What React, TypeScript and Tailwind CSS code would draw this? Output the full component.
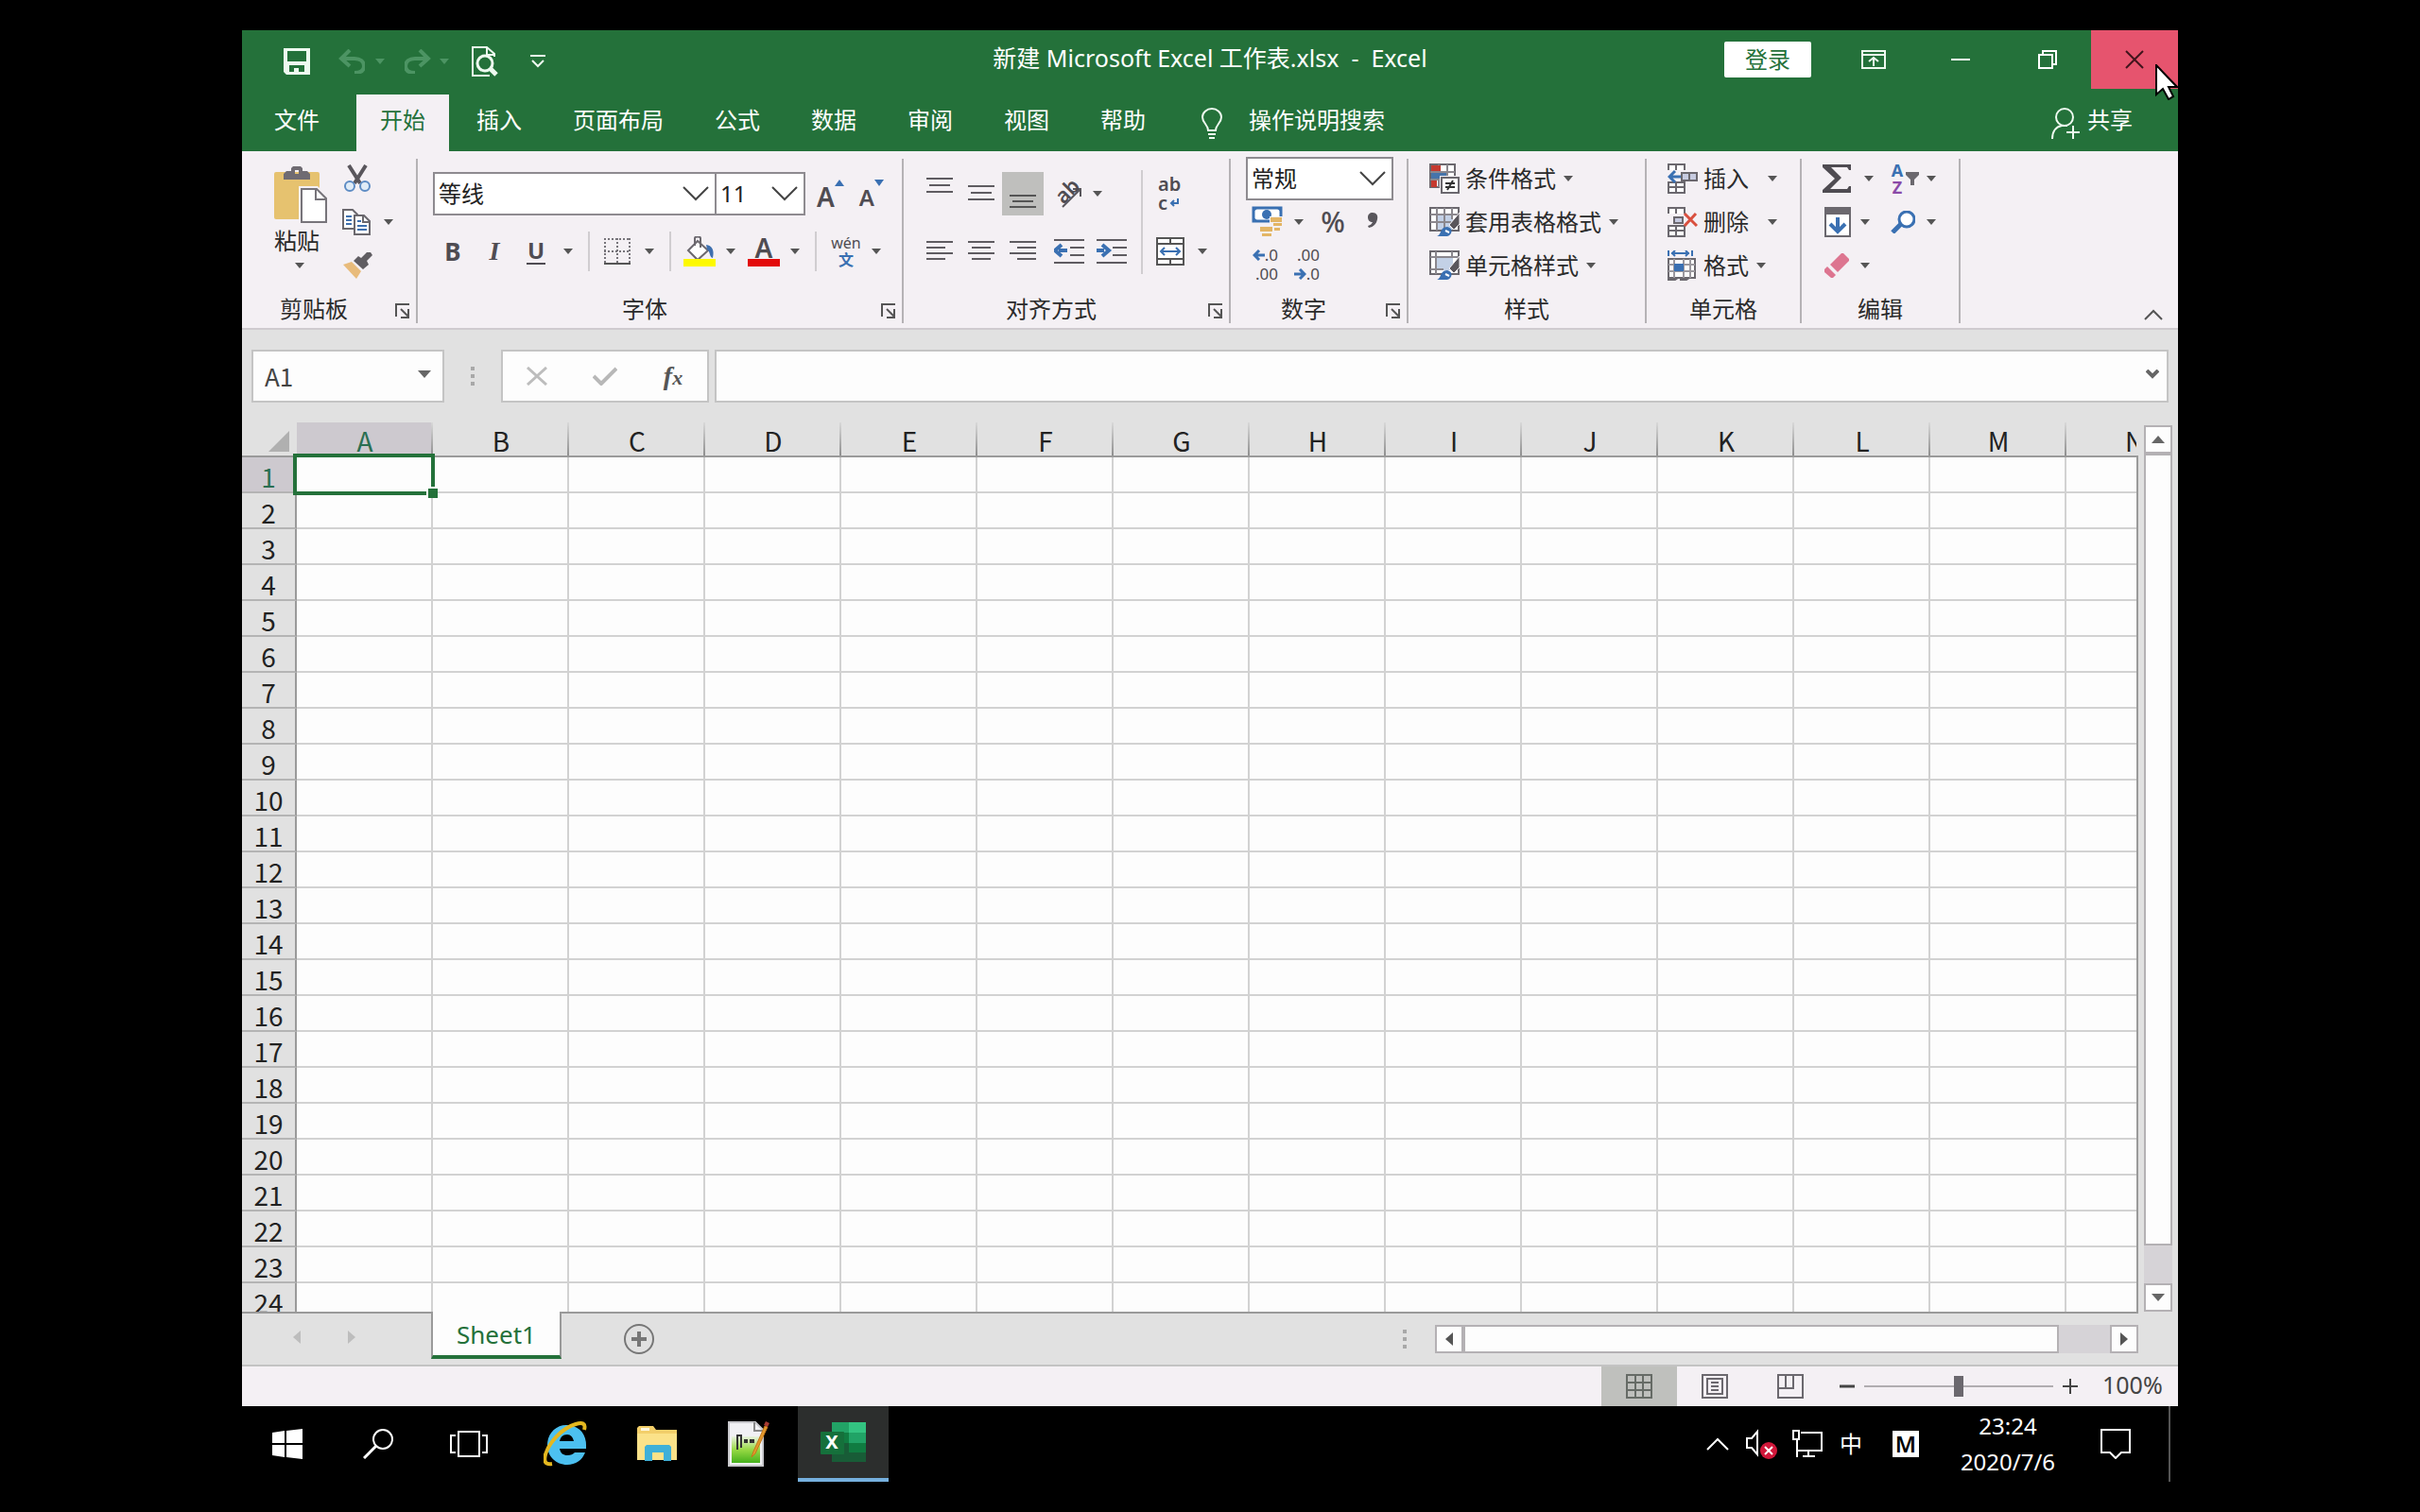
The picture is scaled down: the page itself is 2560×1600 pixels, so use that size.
import { useState, type ReactNode } from 'react';

const COLUMNS = ['A', 'B', 'C', 'D', 'E', 'F', 'G', 'H', 'I', 'J', 'K', 'L', 'M', 'N'];
const ROWS = Array.from({ length: 24 }, (_, i) => i + 1);
const TABS = ['文件', '开始', '插入', '页面布局', '公式', '数据', '审阅', '视图', '帮助'];

interface IconProps {
  w: number;
  h: number;
  children: ReactNode;
  className?: string;
}

const Icon = ({ w, h, children, className = '' }: IconProps) => (
  <svg width={w} height={h} viewBox={`0 0 ${w} ${h}`} fill="none" className={`shrink-0 ${className}`} aria-hidden="true">
    {children}
  </svg>
);

const Caret = ({ className = 'text-[#555]' }: { className?: string }) => (
  <Icon w={10} h={6} className={className}>
    <path d="M0 0h10L5 6z" fill="currentColor" />
  </Icon>
);

const Chevron = () => (
  <Icon w={28} h={16}>
    <path d="M1 1l13 13L27 1" stroke="#444" strokeWidth="2" />
  </Icon>
);

interface ButtonProps {
  label: string;
  children: ReactNode;
  className?: string;
}

const IconButton = ({ label, children, className = '' }: ButtonProps) => (
  <button type="button" aria-label={label} className={`flex shrink-0 items-center justify-center ${className}`}>
    {children}
  </button>
);

const Divider = ({ className = '' }: { className?: string }) => (
  <div className={`w-[2px] shrink-0 bg-[#d0cdd0] ${className}`} />
);

interface GroupProps {
  title: string;
  width: string;
  launcher?: boolean;
  children: ReactNode;
}

const Group = ({ title, width, launcher, children }: GroupProps) => (
  <section className={`flex shrink-0 ${width}`}>
    <div className="flex min-w-0 flex-1 flex-col">
      <div className="h-[146px]">{children}</div>
      <div className="flex h-[30px] items-center">
        <h2 className={`flex-1 text-center leading-7 text-[#2b2b2b] ${launcher ? 'pr-[10px]' : ''}`}>{title}</h2>
        {launcher && (
          <IconButton label={`${title}设置`} className="mr-[6px] mt-1">
            <Icon w={16} h={16}>
              <path d="M1 14V1h14M6 6l8 8M14 6v9H6" stroke="#555" strokeWidth="2" />
            </Icon>
          </IconButton>
        )}
      </div>
    </div>
    <div className="mt-[2px] w-[2px] bg-[#b5b2b5]" />
  </section>
);

/* ---------- 图标 ---------- */

const SaveIcon = () => (
  <Icon w={28} h={28}>
    <path d="M0 0h28v28H3l-3-3zM4 3v11h20V3zM6 18v7h5v-4h5v4h6v-7z" fill="#eefaf0" fillRule="evenodd" />
  </Icon>
);

const UndoIcon = ({ flip }: { flip?: boolean }) => (
  <Icon w={28} h={26} className={flip ? '-scale-x-100' : ''}>
    <path d="M2 10h15c6 0 10 3 10 8s-4 7-10 7" stroke="#4c9463" strokeWidth="4" />
    <path d="M12 1L3 10l9 8" stroke="#4c9463" strokeWidth="4" />
  </Icon>
);

const PreviewIcon = () => (
  <Icon w={28} h={32}>
    <path d="M19 31H1V1h15l8 7v3M16 1v8h8" stroke="#eefaf0" strokeWidth="2" />
    <circle cx="14" cy="18" r="8" stroke="#eefaf0" strokeWidth="3" />
    <path d="M19 23l7 7" stroke="#eefaf0" strokeWidth="5" />
  </Icon>
);

const PasteIcon = () => (
  <Icon w={56} h={60}>
    <rect x="0" y="6" width="48" height="50" rx="2" fill="#e6c26f" />
    <path d="M10 14V8l3-3h5V2l2-2h8l2 2v3h5l3 3v6zM22 4v4h4V4z" fill="#6f6b72" fillRule="evenodd" />
    <path d="M26 21h20l12 12v30H26z" fill="#f4f0f4" />
    <path d="M29 24h16l10 10v25H29z" fill="#fff" stroke="#77747a" strokeWidth="2" />
    <path d="M44 24v11h11" stroke="#77747a" strokeWidth="2" />
  </Icon>
);

const CutIcon = () => (
  <Icon w={30} h={30}>
    <path d="M6 1l12 19M24 1L12 20" stroke="#59565c" strokeWidth="4" />
    <circle cx="7" cy="23" r="5" stroke="#5d8cc4" strokeWidth="2" fill="#e0ecf7" />
    <circle cx="23" cy="23" r="5" stroke="#5d8cc4" strokeWidth="2" fill="#e0ecf7" />
  </Icon>
);

const CopyIcon = () => (
  <Icon w={30} h={28}>
    <path d="M1 1h10l5 5v15H1z" fill="#fff" stroke="#6b686e" strokeWidth="2" />
    <path d="M4 8h6M4 12h6M4 16h6" stroke="#3e6fae" strokeWidth="2" />
    <path d="M13 7h10l6 6v14H13z" fill="#fff" stroke="#6b686e" strokeWidth="2" />
    <path d="M22 7v7h7" stroke="#6b686e" strokeWidth="2" />
    <path d="M16 13h4M16 18h10M16 22h10" stroke="#3e6fae" strokeWidth="2" />
  </Icon>
);

const BrushIcon = () => (
  <Icon w={32} h={28}>
    <path d="M1 13l9-3 10 10-5 8z" fill="#e8bb7b" />
    <path d="M12 9l5-5 3 2 6-6h4l2 3-6 6 2 4-6 5z" fill="#605d62" />
  </Icon>
);

const BorderIcon = () => (
  <Icon w={28} h={28}>
    <path d="M0 1h28M0 14h28M1 0v26M14 0v26M27 0v26" stroke="#77747a" strokeWidth="2" strokeDasharray="2 2" />
    <path d="M0 27h28" stroke="#555" strokeWidth="2" />
  </Icon>
);

const FillIcon = () => (
  <Icon w={34} h={32}>
    <path d="M15 5l11 10-11 10L5 15z" fill="#fff" stroke="#6b686e" strokeWidth="2" />
    <path d="M12 10V2c0-2 6-2 6 0v10" stroke="#6b686e" strokeWidth="2" />
    <path d="M24 9c6 1 9 5 7 14-4-1-2-6-6-9z" fill="#3e6fae" />
    <path d="M0 24h34v8H0z" fill="#fdf900" />
  </Icon>
);

const Lines = ({ rows, selected }: { rows: [number, number, number][]; selected?: boolean }) => (
  <Icon w={28} h={46}>
    {rows.map(([x, y, len]) => (
      <path key={y} d={`M${x} ${y}h${len}`} stroke={selected ? '#555' : '#5f5c61'} strokeWidth="2" />
    ))}
  </Icon>
);

const IndentIcon = ({ right }: { right?: boolean }) => (
  <Icon w={32} h={26}>
    <path d="M0 1h32M17 9h15M17 17h15M0 25h32" stroke="#5f5c61" strokeWidth="2" />
    <path d={right ? 'M0 12h8M6 6l7 6-7 6' : 'M5 12h9M8 6l-7 6 7 6'} stroke="#3a70b2" strokeWidth="4" />
  </Icon>
);

const MergeIcon = () => (
  <Icon w={30} h={30}>
    <path d="M1 1h28v28H1zM1 7h28M1 23h28M15 1v6M15 23v6" fill="#fff" stroke="#555" strokeWidth="2" />
    <path d="M6 15h18M9 11l-4 4 4 4M21 11l4 4-4 4" stroke="#3a70b2" strokeWidth="2" />
  </Icon>
);

const CurrencyIcon = () => (
  <Icon w={34} h={34}>
    <path d="M2 2h29v14H2z" fill="#fff" stroke="#3a70b2" strokeWidth="3" />
    <path d="M1 1h7l-7 6zM32 1h-7l7 6zM1 17h7l-7-6z" fill="#3a70b2" />
    <circle cx="16" cy="9" r="5" fill="#3a70b2" />
    <path d="M19 11h14v11H24v6H9v-7h10z" fill="#f4f0f4" />
    <path d="M20 12h12v5H20zM23 18h9v3h-9zM9 22h13v5H9zM24 23h6v3h-6zM11 29h10v3H11z" fill="#e3b565" />
  </Icon>
);

const CommaIcon = () => (
  <Icon w={12} h={16}>
    <path d="M6 0c4 0 6 3 5 7-1 5-4 8-9 9l-1-2c3-1 4-2 5-4-3 0-5-2-5-5s2-5 5-5z" fill="#59565c" />
  </Icon>
);

const ArrowLeft = ({ flip }: { flip?: boolean }) => (
  <Icon w={13} h={12} className={flip ? '-scale-x-100' : ''}>
    <path d="M2 6h11M7 1L2 6l5 5" stroke="#3a70b2" strokeWidth="3" />
  </Icon>
);

const ConditionalIcon = () => (
  <Icon w={32} h={32}>
    <path d="M1 1h26v24H1z" fill="#fff" stroke="#6b686e" strokeWidth="2" />
    <path d="M10 1v24M19 1v24M1 9h26M1 17h26" stroke="#8b888e" strokeWidth="2" />
    <path d="M2 2h10v6H2zM2 18h6v7H2z" fill="#c5392f" />
    <path d="M2 10h16v6H2z" fill="#4674aa" />
    <path d="M11 13h21v19H11z" fill="#f4f0f4" />
    <path d="M13 15h18v16H13z" fill="#fff" stroke="#6b686e" strokeWidth="2" />
    <path d="M17 21h10M17 25h10M25 18l-6 10" stroke="#333" strokeWidth="2" />
  </Icon>
);

const TableStyleIcon = ({ cell }: { cell?: boolean }) => (
  <Icon w={32} h={32}>
    <path d="M1 1h30v24H1z" fill="#fff" stroke="#6b686e" strokeWidth="2" />
    {cell ? <path d="M7 7h18v14H7z" fill="#c3d1e6" /> : <path d="M9 9h16v15H9z" fill="#c3d1e6" />}
    <path
      d={cell ? 'M7 1v24M24 1v6M1 7h30M1 20h14' : 'M8 1v24M16 1v24M24 1v12M1 8h30M1 16h22'}
      stroke="#8b888e"
      strokeWidth="2"
    />
    <path d="M32 6v12l-6 6-5-5z" fill="#59565c" stroke="#f4f0f4" />
    <path d="M8 31c5-1 3-10 11-10 6 1 6 8 0 10z" fill="#3a70b2" />
    <path d="M17 25l4 2" stroke="#fff" strokeWidth="2" />
  </Icon>
);

const InsertCellIcon = () => (
  <Icon w={32} h={32}>
    <path d="M1 7V1h17v6M9 1v6M1 20h17v11H1zM9 20v11M1 25h17" stroke="#6b686e" strokeWidth="2" fill="#fff" />
    <path d="M15 10h16v8H15zM23 10v8" fill="#c7cbe0" stroke="#6b686e" strokeWidth="2" />
    <path d="M2 14h12M8 8l-6 6 6 6" stroke="#3a70b2" strokeWidth="3" />
  </Icon>
);

const DeleteCellIcon = () => (
  <Icon w={32} h={32}>
    <path d="M1 7V1h17v6M9 1v6M1 20h17v11H1zM9 20v11M1 25h17" stroke="#6b686e" strokeWidth="2" fill="#fff" />
    <path d="M7 11h9v6H7z" fill="#c7cbe0" stroke="#6b686e" strokeWidth="2" />
    <path d="M18 7l13 13M30 7L18 20" stroke="#d9503f" strokeWidth="3" />
  </Icon>
);

const FormatCellIcon = () => (
  <Icon w={32} h={32}>
    <path d="M1 0v6M26 0v6M4 3h19M8 0L5 3l3 3M19 0l3 3-3 3" stroke="#3a70b2" strokeWidth="2" />
    <path d="M1 9h28v20H1z" fill="#fff" stroke="#6b686e" strokeWidth="2" />
    <path d="M7 9v20M17 9v20M24 9v20M1 15h28M1 22h28" stroke="#9b989e" strokeWidth="2" />
    <path d="M1 29v2h7l3-2M13 31h7l3-2" stroke="#6b686e" strokeWidth="2" />
    <path d="M7 14h10v8H7z" fill="#3a70b2" />
  </Icon>
);

const SigmaIcon = () => (
  <Icon w={30} h={30}>
    <path d="M0 0h30v6h-2l-2-3H9l11 11L8 26h18l2-3h2v7H0v-3l13-12L0 3z" fill="#4f4c52" />
  </Icon>
);

const FillDownIcon = () => (
  <Icon w={28} h={32}>
    <path d="M1 1h26v30H1z" fill="#fff" stroke="#6b686e" strokeWidth="2" />
    <path d="M0 0h28v8H0z" fill="#6b686e" />
    <path d="M14 11v15M6 18l8 8 8-8" stroke="#3a70b2" strokeWidth="4" />
  </Icon>
);

const FindIcon = () => (
  <Icon w={26} h={24}>
    <circle cx="17" cy="9" r="8" fill="#fff" stroke="#3a70b2" strokeWidth="3" />
    <path d="M11 14l-9 9" stroke="#3a70b2" strokeWidth="5" />
  </Icon>
);

const EraserIcon = () => (
  <Icon w={26} h={26}>
    <path d="M18 0h2l6 6v2L14 20 6 12z" fill="#dd7590" />
    <path d="M0 17l3-3 9 9-3 3h-2l-7-6z" fill="#dd7590" />
  </Icon>
);

const IeIcon = () => (
  <Icon w={46} h={48}>
    <path
      d="M24 4c12 0 21 8 21 21v4H17c1 5 4 7 8 7 4 0 6-1 8-3h11c-3 8-10 13-19 13C13 46 4 37 4 25S13 4 24 4zm-7 17h15c-1-4-3-7-7-7-5 0-7 3-8 7z"
      fill="#4cc0f0"
      fillRule="evenodd"
    />
    <path d="M9 45c-7 1-9-2-7-10C6 22 20 7 34 3c7-2 11-1 9 6" stroke="#e4b71f" strokeWidth="4" />
  </Icon>
);

const FolderIcon = () => (
  <Icon w={44} h={38}>
    <path d="M1 2l2-2h15l3 4h22v30l-1 2H1z" fill="#f3cf6a" />
    <path d="M1 8h42v28H1z" fill="#fbe289" />
    <path d="M5 2h9v3H5z" fill="#fff8df" />
    <path d="M9 37V22l2-2h24l2 2v15h-8v-9H17v9z" fill="#3fb0d8" />
  </Icon>
);

const NotepadIcon = () => (
  <Icon w={44} h={48}>
    <defs>
      <linearGradient id="pad" x1="0" y1="0" x2="0" y2="1">
        <stop offset="0" stopColor="#e9f3df" />
        <stop offset="0.5" stopColor="#98d944" />
        <stop offset="1" stopColor="#45b01c" />
      </linearGradient>
    </defs>
    <path d="M1 1h28l8 8v38H1z" fill="#f1f1f4" stroke="#c8c8cc" strokeWidth="2" />
    <path d="M4 16h30v28H4z" fill="url(#pad)" />
    <path d="M28 1v9h9" stroke="#888" strokeWidth="2" />
    <path d="M10 30V15h4v13" stroke="#333" strokeWidth="2" />
    <path d="M17 21h4M23 21h5" stroke="#333" strokeWidth="4" />
    <path d="M39 5L27 32l-2 6 4-4L42 6z" fill="#e39a2d" stroke="#c4761b" />
    <path d="M40 0l4 2-2 4-4-2z" fill="#a63b32" />
  </Icon>
);

const ExcelIcon = () => (
  <div className="grid">
    <Icon w={48} h={44} className="col-start-1 row-start-1">
      <path d="M12 1h18v11H12z" fill="#22a366" />
      <path d="M30 1h18v11H30z" fill="#33c481" />
      <path d="M12 12h18v11H12z" fill="#107c41" />
      <path d="M30 12h18v11H30z" fill="#21a366" />
      <path d="M12 23h18v10H12z" fill="#185c37" />
      <path d="M30 23h18v10H30z" fill="#107c41" />
      <path d="M12 33h36v10H12z" fill="#185c37" />
      <rect x="0" y="11" width="25" height="24" rx="1" fill="#15703b" />
    </Icon>
    <span className="col-start-1 row-start-1 mb-px w-6 self-center text-center text-xl leading-none font-bold text-white">X</span>
  </div>
);

/* ---------- 标题栏与选项卡 ---------- */

const TitleBar = () => (
  <header className="grid h-[68px] grid-cols-[1fr_auto_1fr] bg-[#24713a] text-white">
    <div className="flex h-[66px] items-center pl-11">
      <IconButton label="保存"><SaveIcon /></IconButton>
      <IconButton label="撤消" className="ml-[30px] gap-[11px]">
        <UndoIcon />
        <Caret className="text-[#4c9463]" />
      </IconButton>
      <IconButton label="恢复" className="ml-[21px] gap-[9px]">
        <UndoIcon flip />
        <Caret className="text-[#4c9463]" />
      </IconButton>
      <IconButton label="打印预览" className="ml-6"><PreviewIcon /></IconButton>
      <IconButton label="自定义快速访问工具栏" className="ml-[34px]">
        <Icon w={16} h={14}>
          <path d="M0 1h16M2 6l6 6 6-6" stroke="#eefaf0" strokeWidth="2" />
        </Icon>
      </IconButton>
    </div>
    <h1 className="h-[58px] text-[25px] leading-[58px] whitespace-pre">新建 Microsoft Excel 工作表.xlsx  -  Excel</h1>
    <div className="flex h-[62px] items-center justify-end">
      <button type="button" className="mr-5 h-[38px] w-[92px] rounded-xs bg-white leading-9 text-[#24713a]">登录</button>
      <IconButton label="功能区显示选项" className="h-full w-[92px]">
        <Icon w={26} h={20}>
          <path d="M1 1h24v18H1zM1 5h24M13 17V8M8 12l5-4 5 4" stroke="#eefaf0" strokeWidth="2" />
        </Icon>
      </IconButton>
      <IconButton label="最小化" className="h-full w-[92px]">
        <Icon w={20} h={2}><path d="M0 1h20" stroke="#fff" strokeWidth="2" /></Icon>
      </IconButton>
      <IconButton label="向下还原" className="h-full w-[92px]">
        <Icon w={20} h={20}>
          <path d="M1 5h14v14H1zM5 5V1h14v14h-4" stroke="#fff" strokeWidth="2" />
        </Icon>
      </IconButton>
      <div className="relative h-full">
        <IconButton label="关闭" className="h-full w-[92px] bg-[#e6546e]">
          <Icon w={20} h={20}><path d="M1 1l18 18M19 1L1 19" stroke="#40141d" strokeWidth="2" /></Icon>
        </IconButton>
        <Icon w={24} h={38} className="absolute top-9 right-0 z-10">
          <path d="M1 1v31l7-6 6 11 5-3-5-10h9z" fill="#fff" stroke="#000" strokeWidth="2" />
        </Icon>
      </div>
    </div>
  </header>
);

const TabBar = () => (
  <nav className="flex h-[60px] items-center bg-[#24713a] pl-[9px] text-white">
    {TABS.map((tab) => (
      <button
        key={tab}
        type="button"
        className={`h-full shrink-0 px-[25px] pb-[6px] ${tab === '文件' ? 'mr-[14px]' : 'mr-1'} ${
          tab === '开始' ? 'bg-[#f4f0f4] text-[#24713a]' : ''
        }`}
      >
        {tab}
      </button>
    ))}
    <button type="button" className="ml-[29px] flex h-full items-center gap-[27px] pb-[6px]">
      <Icon w={24} h={34} className="mt-2">
        <path d="M8 24c0-6-6-8-6-14a10 9 0 0120 0c0 6-6 8-6 14zM8 28h8M9 32h6" stroke="#eefaf0" strokeWidth="2" />
      </Icon>
      操作说明搜索
    </button>
    <button type="button" className="mr-12 ml-auto flex h-full items-center gap-2 pb-[6px]">
      <Icon w={30} h={34} className="mt-2">
        <circle cx="14" cy="10" r="9" stroke="#eefaf0" strokeWidth="2" />
        <path d="M1 33c0-8 4-13 10-14h6M23 19v14M16 26h14" stroke="#eefaf0" strokeWidth="2" />
      </Icon>
      共享
    </button>
  </nav>
);

/* ---------- 功能区 ---------- */

interface ComboProps {
  label: string;
  options: string[];
  className: string;
}

const Combo = ({ label, options, className }: ComboProps) => (
  <label className={`flex h-[46px] shrink-0 items-center border-2 border-[#8e8b90] bg-white pr-[6px] pl-1 ${className}`}>
    <select aria-label={label} className="h-full min-w-0 flex-1 appearance-none bg-transparent leading-9 text-[#222] outline-none">
      {options.map((option) => (
        <option key={option}>{option}</option>
      ))}
    </select>
    <Chevron />
  </label>
);

const ClipboardGroup = () => (
  <Group title="剪贴板" width="w-[186px]" launcher>
    <div className="flex">
      <button type="button" className="mt-[10px] ml-[34px] flex w-14 flex-col items-start leading-[38px] text-[#2b2b2b]">
        <PasteIcon />
        粘贴
        <Caret className="ml-[22px] mt-1 text-[#555]" />
      </button>
      <div className="ml-4">
        <IconButton label="剪切" className="h-[46px] w-8"><CutIcon /></IconButton>
        <IconButton label="复制" className="h-[46px] gap-[14px]">
          <CopyIcon />
          <Caret />
        </IconButton>
        <IconButton label="格式刷" className="h-[46px] w-8"><BrushIcon /></IconButton>
      </div>
    </div>
  </Group>
);

const FontGroup = () => (
  <Group title="字体" width="w-[514px]" launcher>
    <div className="flex pt-4 pl-4 text-[#4f4c52]">
      <Combo label="字体" options={['等线', '宋体', '微软雅黑']} className="w-[300px]" />
      <Combo label="字号" options={['11', '12', '14']} className="-ml-[2px] w-[96px]" />
      <IconButton label="增大字号" className="ml-3 h-[46px] items-start">
        <span className="text-[28px] leading-[52px] font-semibold">A</span>
        <Icon w={10} h={7} className="mt-2"><path d="M0 7h10L5 0z" fill="#3a70b2" /></Icon>
      </IconButton>
      <IconButton label="减小字号" className="ml-4 h-[46px] items-start">
        <span className="text-2xl leading-[54px] font-semibold">A</span>
        <Icon w={10} h={7} className="mt-2"><path d="M0 0h10L5 7z" fill="#3a70b2" /></Icon>
      </IconButton>
    </div>
    <div className="mt-4 flex h-11 items-center pl-[15px] text-[#4f4c52]">
      <IconButton label="加粗" className="w-11 text-[26px] font-bold">B</IconButton>
      <IconButton label="倾斜" className="w-11 font-['Liberation_Serif',serif] text-[28px] font-bold italic">I</IconButton>
      <IconButton label="下划线" className="w-11">
        <span className="border-b-2 border-[#4f4c52] px-[1px] text-2xl leading-[26px] font-bold">U</span>
      </IconButton>
      <IconButton label="下划线选项" className="w-6"><Caret /></IconButton>
      <Divider className="mx-[9px] h-[42px]" />
      <IconButton label="边框" className="w-10"><BorderIcon /></IconButton>
      <IconButton label="边框选项" className="w-7"><Caret /></IconButton>
      <Divider className="mx-[7px] h-[42px]" />
      <IconButton label="填充颜色" className="w-[46px]"><FillIcon /></IconButton>
      <IconButton label="填充颜色选项" className="w-5"><Caret /></IconButton>
      <IconButton label="字体颜色" className="w-[50px]">
        <span className="flex h-8 w-[34px] items-end justify-center border-b-8 border-[#e30b0b] text-[28px] leading-6 font-semibold">A</span>
      </IconButton>
      <IconButton label="字体颜色选项" className="w-4"><Caret /></IconButton>
      <Divider className="mx-[13px] h-[42px]" />
      <button type="button" aria-label="拼音指南" className="flex w-9 flex-col items-center text-base leading-[18px]">
        <span>wén</span>
        <span className="font-bold text-[#3a70b2]">文</span>
      </button>
      <IconButton label="拼音选项" className="w-7"><Caret /></IconButton>
    </div>
  </Group>
);

const AlignGroup = () => (
  <Group title="对齐方式" width="w-[346px]" launcher>
    <div className="flex">
      <div className="w-[251px] pt-4 pl-4">
        <div className="flex h-[46px]">
          <IconButton label="顶端对齐" className="w-11"><Lines rows={[[0, 7, 28], [3, 14, 22], [0, 21, 28]]} /></IconButton>
          <IconButton label="垂直居中" className="w-11"><Lines rows={[[0, 15, 28], [3, 22, 22], [0, 29, 28]]} /></IconButton>
          <IconButton label="底端对齐" className="w-11 bg-[#bfbfbd]">
            <Lines rows={[[0, 25, 28], [3, 31, 22], [0, 37, 28]]} selected />
          </IconButton>
          <IconButton label="方向" className="w-12">
            <div className="grid">
              <span className="col-start-1 row-start-1 -rotate-45 self-start text-[22px] leading-6 font-semibold text-[#4f4c52]">ab</span>
              <Icon w={34} h={32} className="col-start-1 row-start-1">
                <path d="M13 30L32 11M24 11h8v8" stroke="#59565c" strokeWidth="2" />
              </Icon>
            </div>
          </IconButton>
          <IconButton label="方向选项" className="w-[18px]"><Caret /></IconButton>
        </div>
        <div className="mt-4 flex h-11">
          <IconButton label="左对齐" className="w-11"><Lines rows={[[0, 13, 28], [0, 19, 20], [0, 25, 28], [0, 31, 20]]} /></IconButton>
          <IconButton label="居中" className="w-11"><Lines rows={[[0, 13, 28], [4, 19, 20], [0, 25, 28], [4, 31, 20]]} /></IconButton>
          <IconButton label="右对齐" className="w-11"><Lines rows={[[0, 13, 28], [8, 19, 20], [0, 25, 28], [8, 31, 20]]} /></IconButton>
          <IconButton label="减少缩进量" className="w-[54px]"><IndentIcon /></IconButton>
          <IconButton label="增加缩进量" className="w-9"><IndentIcon right /></IconButton>
        </div>
      </div>
      <Divider className="mt-[14px] h-[110px]" />
      <div className="pt-4 text-[#4f4c52]">
        <button type="button" aria-label="自动换行" className="flex h-[46px] w-[58px] flex-col items-start justify-center pl-4 text-xl leading-5 font-semibold">
          <span>ab</span>
          <span className="flex items-center gap-[2px]">
            c
            <Icon w={10} h={10}><path d="M9 0v5H2M5 2L2 5l3 3" stroke="#3a70b2" strokeWidth="2" /></Icon>
          </span>
        </button>
        <div className="mt-4 flex h-11">
          <IconButton label="合并后居中" className="w-[58px]"><MergeIcon /></IconButton>
          <IconButton label="合并选项" className="w-[10px]"><Caret /></IconButton>
        </div>
      </div>
    </div>
  </Group>
);

const NumberGroup = () => (
  <Group title="数字" width="w-[188px]" launcher>
    <div className="pl-4 text-[#4f4c52]">
      <Combo label="数字格式" options={['常规', '数值', '货币']} className="w-[156px]" />
      <div className="flex h-[46px] items-center">
        <IconButton label="会计数字格式" className="w-[46px]"><CurrencyIcon /></IconButton>
        <IconButton label="货币选项" className="w-5"><Caret /></IconButton>
        <IconButton label="百分比样式" className="w-[52px] text-[30px] leading-8 font-medium">%</IconButton>
        <IconButton label="千位分隔样式" className="w-8 pb-1"><CommaIcon /></IconButton>
      </div>
      <div className="flex h-11 gap-4 pl-[6px] text-[17px] leading-[20px]">
        <button type="button" aria-label="增加小数位数" className="flex w-7 flex-col items-end justify-center">
          <span className="flex items-center"><ArrowLeft />.0</span>
          <span>.00</span>
        </button>
        <button type="button" aria-label="减少小数位数" className="flex w-7 flex-col items-end justify-center">
          <span>.00</span>
          <span className="flex items-center"><ArrowLeft flip />.0</span>
        </button>
      </div>
    </div>
  </Group>
);

interface CommandProps {
  icon: ReactNode;
  text: string;
  gap?: string;
}

const Command = ({ icon, text, gap = 'gap-2' }: CommandProps) => (
  <button type="button" className={`flex h-[46px] items-center whitespace-nowrap text-[#2b2b2b] ${gap}`}>
    <span className="flex items-center gap-[6px]">
      {icon}
      {text}
    </span>
    <Caret />
  </button>
);

const StyleGroup = () => (
  <Group title="样式" width="w-[252px]">
    <div className="pl-[22px]">
      <Command icon={<ConditionalIcon />} text="条件格式" />
      <Command icon={<TableStyleIcon />} text="套用表格格式" />
      <Command icon={<TableStyleIcon cell />} text="单元格样式" />
    </div>
  </Group>
);

const CellGroup = () => (
  <Group title="单元格" width="w-[164px]">
    <div className="pl-[22px]">
      <Command icon={<InsertCellIcon />} text="插入" gap="gap-5" />
      <Command icon={<DeleteCellIcon />} text="删除" gap="gap-5" />
      <Command icon={<FormatCellIcon />} text="格式" />
    </div>
  </Group>
);

const EditGroup = () => (
  <Group title="编辑" width="w-[168px]">
    <div className="grid grid-cols-[72px_50px] pl-[22px]">
      <IconButton label="自动求和" className="h-[46px] justify-start gap-[14px]"><SigmaIcon /><Caret /></IconButton>
      <button type="button" aria-label="排序和筛选" className="flex h-[46px] items-center gap-[2px]">
        <span className="flex w-[14px] flex-col text-lg leading-[18px] font-bold">
          <span className="text-[#3a70b2]">A</span>
          <span className="text-[#8a4aa8]">Z</span>
        </span>
        <Icon w={14} h={14} className="mr-[6px]"><path d="M0 0h14v3l-5 5v6H5V8L0 3z" fill="#6b686e" /></Icon>
        <Caret />
      </button>
      <IconButton label="填充" className="h-[46px] justify-start gap-[10px] pl-[2px]"><FillDownIcon /><Caret /></IconButton>
      <IconButton label="查找和选择" className="h-[46px] justify-start gap-3"><FindIcon /><Caret /></IconButton>
      <IconButton label="清除" className="h-[46px] justify-start gap-3 pl-[2px]"><EraserIcon /><Caret /></IconButton>
    </div>
  </Group>
);

const Ribbon = () => (
  <div className="flex h-[189px] border-b-2 border-[#cfcbcf] bg-[#f4f0f4] pt-[6px] pb-[5px]">
    <ClipboardGroup />
    <FontGroup />
    <AlignGroup />
    <NumberGroup />
    <StyleGroup />
    <CellGroup />
    <EditGroup />
    <IconButton label="折叠功能区" className="mr-4 mb-[3px] ml-auto self-end">
      <Icon w={20} h={12}><path d="M1 11l9-9 9 9" stroke="#555" strokeWidth="2" /></Icon>
    </IconButton>
  </div>
);

/* ---------- 编辑栏 ---------- */

const Dots = () => (
  <Icon w={4} h={20}>
    <path d="M0 0h4v4H0zM0 8h4v4H0zM0 16h4v4H0z" fill="#a8a8a8" />
  </Icon>
);

const FormulaBar = () => {
  const [formula, setFormula] = useState('');

  return (
    <div className="flex h-[98px] items-start bg-[#e1e1e1] pt-[21px] pr-[10px] pl-[10px]">
      <div className="flex h-[56px] w-[204px] items-center border-2 border-[#c4c4c4] bg-[#fdfdfd] pr-3 pl-3">
        <input aria-label="名称框" defaultValue="A1" className="min-w-0 flex-1 bg-transparent font-['Noto_Sans_CJK_SC',sans-serif] text-[26px] text-[#444] outline-none" />
        <Icon w={14} h={8} className="mb-1"><path d="M0 0h14L7 8z" fill="#666" /></Icon>
      </div>
      <div className="flex h-[56px] w-[60px] items-center justify-center"><Dots /></div>
      <div className="flex h-[56px] w-[220px] items-center border-2 border-[#c4c4c4] bg-[#fdfdfd]">
        <IconButton label="取消" className="w-[72px]">
          <Icon w={22} h={20}><path d="M1 1l20 18M21 1L1 19" stroke="#bdbdbd" strokeWidth="3" /></Icon>
        </IconButton>
        <IconButton label="输入" className="w-[72px]">
          <Icon w={26} h={20}><path d="M1 10l8 8L25 2" stroke="#b8b8b8" strokeWidth="4" /></Icon>
        </IconButton>
        <IconButton label="插入函数" className="w-[72px] font-['Liberation_Serif',serif] text-[28px] leading-8 font-bold text-[#555] italic">
          f<span className="pt-1 text-[22px]">x</span>
        </IconButton>
      </div>
      <div className="ml-[6px] flex h-[56px] flex-1 items-center border-2 border-[#c4c4c4] bg-[#fdfdfd] pr-2 pl-2">
        <input
          aria-label="编辑栏"
          value={formula}
          onChange={(e) => setFormula(e.target.value)}
          className="min-w-0 flex-1 bg-transparent outline-none"
        />
        <Icon w={14} h={10} className="mb-1"><path d="M1 1l6 6 6-6" stroke="#666" strokeWidth="4" /></Icon>
      </div>
    </div>
  );
};

/* ---------- 工作表 ---------- */

const Sheet = () => (
  <div className="flex min-h-0 flex-1 bg-[#e1e1e1]">
    <div className="min-w-0 flex-1 overflow-hidden font-['Noto_Sans_CJK_SC',sans-serif] text-[28px] leading-8 text-[#222]">
      <table className="w-[2074px] table-fixed border-separate border-spacing-0">
        <colgroup>
          <col className="w-[58px]" />
          {COLUMNS.map((c) => (
            <col key={c} className="w-36" />
          ))}
        </colgroup>
        <thead>
          <tr className="h-[37px]">
            <th className="border-b-2 border-[#9a9a9a] p-0">
              <Icon w={22} h={22} className="mt-1 ml-[28px]"><path d="M22 0v22H0z" fill="#b0b0b0" /></Icon>
            </th>
            {COLUMNS.map((c) => (
              <th
                key={c}
                scope="col"
                className={`border-b-2 border-[#9a9a9a] bg-[linear-gradient(to_bottom,#d8d8d8,#8f8f8f)] bg-[length:2px_100%] bg-right bg-no-repeat p-0 pt-[2px] font-normal ${
                  c === 'A' ? 'bg-[#cdc9cf] text-[#2b6f52]' : ''
                }`}
              >
                {c}
              </th>
            ))}
          </tr>
        </thead>
        <tbody>
          {ROWS.map((r) => (
            <tr key={r} className="h-[38px]">
              <th
                scope="row"
                className={`border-r-2 border-b-2 border-r-[#9a9a9a] border-b-[#b4b4b4] p-0 pt-[3px] font-normal ${
                  r === 1 ? 'bg-[#cdc9cf] text-[#2b6f52]' : ''
                }`}
              >
                {r}
              </th>
              {COLUMNS.map((c) => (
                <td key={c} className="relative border-r-2 border-b-2 border-[#d2d2d2] bg-[#fdfdfd] p-0">
                  {r === 1 && c === 'A' && (
                    <div className="absolute -top-1 -right-1 -bottom-1 -left-1 z-10 border-4 border-[#24713a]">
                      <div className="absolute -right-[7px] -bottom-[7px] h-3 w-3 border-t-2 border-l-2 border-[#fdfdfd] bg-[#24713a]" />
                    </div>
                  )}
                </td>
              ))}
            </tr>
          ))}
        </tbody>
      </table>
    </div>
    <div className="mt-[35px] w-[2px] bg-[#9a9a9a]" />
    <div className="flex w-[42px] flex-col pt-[3px] pl-[6px]">
      <IconButton label="向上滚动" className="h-[30px] w-[30px] border-2 border-[#b4b1b4] bg-[#fdfdfd]">
        <Icon w={14} h={8}><path d="M0 8h14L7 0z" fill="#666" /></Icon>
      </IconButton>
      <div className="flex w-[30px] flex-1 flex-col bg-[#d6d3d7]">
        <div className="mb-10 flex-1 border-2 border-[#b4b1b4] bg-[#fdfdfd]" />
      </div>
      <IconButton label="向下滚动" className="h-[30px] w-[30px] border-2 border-[#b4b1b4] bg-[#fdfdfd]">
        <Icon w={14} h={8}><path d="M0 0h14L7 8z" fill="#666" /></Icon>
      </IconButton>
    </div>
  </div>
);

const SheetTabs = () => (
  <div className="flex h-[58px] border-b-2 border-[#c3c3c3] bg-[#e1e1e1]">
    <div className="flex w-[200px] items-center border-t-2 border-[#9a9a9a] pb-1 pl-[54px]">
      <IconButton label="上一张">
        <Icon w={8} h={14}><path d="M8 0v14L0 7z" fill="#bdbdbd" /></Icon>
      </IconButton>
      <IconButton label="下一张" className="ml-[50px]">
        <Icon w={8} h={14}><path d="M0 0v14l8-7z" fill="#bdbdbd" /></Icon>
      </IconButton>
    </div>
    <button type="button" className="h-[50px] w-[138px] border-x-2 border-b-4 border-x-[#9a9a9a] border-b-[#24713a] bg-[#fdfdfd] pt-[2px] text-[26px] text-[#24713a]">
      Sheet1
    </button>
    <div className="flex flex-1 items-center border-t-2 border-[#9a9a9a]">
      <IconButton label="新工作表" className="ml-[66px]">
        <Icon w={32} h={32}>
          <circle cx="16" cy="16" r="15" stroke="#777" strokeWidth="2" />
          <path d="M16 8v16M8 16h16" stroke="#777" strokeWidth="4" />
        </Icon>
      </IconButton>
      <div className="ml-auto flex items-center">
        <Dots />
        <IconButton label="向左滚动" className="ml-[30px] h-[30px] w-[30px] border-2 border-[#b4b1b4] bg-[#fdfdfd]">
          <Icon w={8} h={14}><path d="M8 0v14L0 7z" fill="#555" /></Icon>
        </IconButton>
        <div className="w-[684px] bg-[#d6d3d7]">
          <div className="h-[30px] w-[630px] border-2 border-[#b4b1b4] bg-[#fdfdfd]" />
        </div>
        <IconButton label="向右滚动" className="h-[30px] w-[30px] border-2 border-[#b4b1b4] bg-[#fdfdfd]">
          <Icon w={8} h={14}><path d="M0 0v14l8-7z" fill="#555" /></Icon>
        </IconButton>
      </div>
    </div>
    <div className="w-[42px]" />
  </div>
);

const StatusBar = () => {
  const [zoom, setZoom] = useState(100);

  return (
    <footer className="flex h-[42px] items-center justify-end bg-[#f4f0f4] pr-4 text-[#444]">
      <IconButton label="普通" className="h-full w-20 bg-[#bfc0bd]">
        <Icon w={28} h={26}>
          <path d="M1 1h26v24H1zM10 1v24M18 1v24M1 9h26M1 17h26" stroke="#666b66" strokeWidth="2" />
        </Icon>
      </IconButton>
      <IconButton label="页面布局" className="h-full w-20">
        <Icon w={28} h={26}>
          <path d="M1 1h26v24H1zM6 5h16v16H6zM10 9h8M10 13h8M10 17h8" stroke="#6b686e" strokeWidth="2" />
        </Icon>
      </IconButton>
      <IconButton label="分页预览" className="h-full w-20">
        <Icon w={28} h={26}>
          <path d="M1 1h26v24H1zM1 15h16V1M9 1v14" stroke="#6b686e" strokeWidth="2" />
        </Icon>
      </IconButton>
      <IconButton label="缩小" className="ml-[12px]">
        <Icon w={16} h={16}><path d="M0 8h16" stroke="#444" strokeWidth="3" /></Icon>
      </IconButton>
      <input
        type="range"
        aria-label="显示比例"
        min={10}
        max={190}
        value={zoom}
        onChange={(e) => setZoom(Number(e.target.value))}
        className="mx-[10px] h-6 w-[200px] appearance-none bg-transparent bg-[linear-gradient(#b0adb0,#b0adb0)] bg-[length:100%_2px] bg-center bg-no-repeat [&::-webkit-slider-thumb]:h-[22px] [&::-webkit-slider-thumb]:w-[10px] [&::-webkit-slider-thumb]:appearance-none [&::-webkit-slider-thumb]:bg-[#6b686e]"
      />
      <IconButton label="放大" className="mr-[26px]">
        <Icon w={16} h={16}><path d="M0 8h16M8 0v16" stroke="#444" strokeWidth="2" /></Icon>
      </IconButton>
      <output className="w-16 pb-1 text-[25px] leading-9">{zoom}%</output>
    </footer>
  );
};

/* ---------- 任务栏 ---------- */

const Taskbar = () => (
  <div className="flex h-20 shrink-0 items-stretch bg-black text-white">
    <IconButton label="开始菜单" className="w-24">
      <Icon w={32} h={32}>
        <path d="M0 4l13-2v13H0zM15 2l17-2v15H15zM0 17h13v13L0 28zM15 17h17v15l-17-2z" fill="#fff" />
      </Icon>
    </IconButton>
    <IconButton label="搜索" className="w-24">
      <Icon w={32} h={32}>
        <circle cx="21" cy="11" r="10" stroke="#fff" strokeWidth="2" />
        <path d="M14 18L1 31" stroke="#fff" strokeWidth="3" />
      </Icon>
    </IconButton>
    <IconButton label="任务视图" className="w-24">
      <Icon w={40} h={28}>
        <path d="M9 1h22v26H9zM6 5H1v18h5M34 5h5v18h-5" stroke="#fff" strokeWidth="2" />
      </Icon>
    </IconButton>
    <IconButton label="Internet Explorer" className="ml-[6px] w-24"><IeIcon /></IconButton>
    <IconButton label="文件资源管理器" className="w-[98px]"><FolderIcon /></IconButton>
    <IconButton label="Notepad++" className="mr-1 w-24"><NotepadIcon /></IconButton>
    <IconButton label="Excel" className="w-24 border-b-4 border-[#76b0de] bg-[#2c2e2d]"><ExcelIcon /></IconButton>
    <div className="mr-2 ml-auto flex items-center border-r-2 border-[#555] pr-10">
      <IconButton label="显示隐藏的图标">
        <Icon w={24} h={14}><path d="M1 13L12 2l11 11" stroke="#fff" strokeWidth="2" /></Icon>
      </IconButton>
      <IconButton label="音量" className="ml-[18px]">
        <Icon w={34} h={34}>
          <path d="M1 11h5l6-7v24l-6-7H1z" stroke="#fff" strokeWidth="2" />
          <circle cx="24" cy="24" r="9" fill="#d1173a" />
          <path d="M20 20l8 8M28 20l-8 8" stroke="#fff" strokeWidth="2" />
        </Icon>
      </IconButton>
      <IconButton label="网络" className="ml-[15px]">
        <Icon w={32} h={30}>
          <path d="M9 3h22v19H5M1 1h6v9H1zM5 10v19M17 22v6M11 28h13" stroke="#fff" strokeWidth="2" />
        </Icon>
      </IconButton>
      <button type="button" className="ml-[18px] text-2xl leading-8">中</button>
      <button type="button" className="ml-8 h-7 w-7 bg-white text-2xl leading-7 font-semibold text-black">M</button>
      <div className="ml-10 w-[108px] text-center leading-[38px]">
        <time className="block">23:24</time>
        <time className="block">2020/7/6</time>
      </div>
      <IconButton label="通知" className="ml-11">
        <Icon w={32} h={32}>
          <path d="M1 1h30v24h-9l-6 6-6-6H1z" stroke="#fff" strokeWidth="2" />
        </Icon>
      </IconButton>
    </div>
  </div>
);

export default function App() {
  return (
    <div className="flex h-screen flex-col overflow-hidden bg-black px-[10%] py-8 font-['Noto_Sans','Noto_Sans_CJK_SC',sans-serif] text-2xl">
      <main className="flex min-h-0 flex-1 flex-col overflow-hidden">
        <TitleBar />
        <TabBar />
        <Ribbon />
        <FormulaBar />
        <Sheet />
        <SheetTabs />
        <StatusBar />
      </main>
      <Taskbar />
    </div>
  );
}
